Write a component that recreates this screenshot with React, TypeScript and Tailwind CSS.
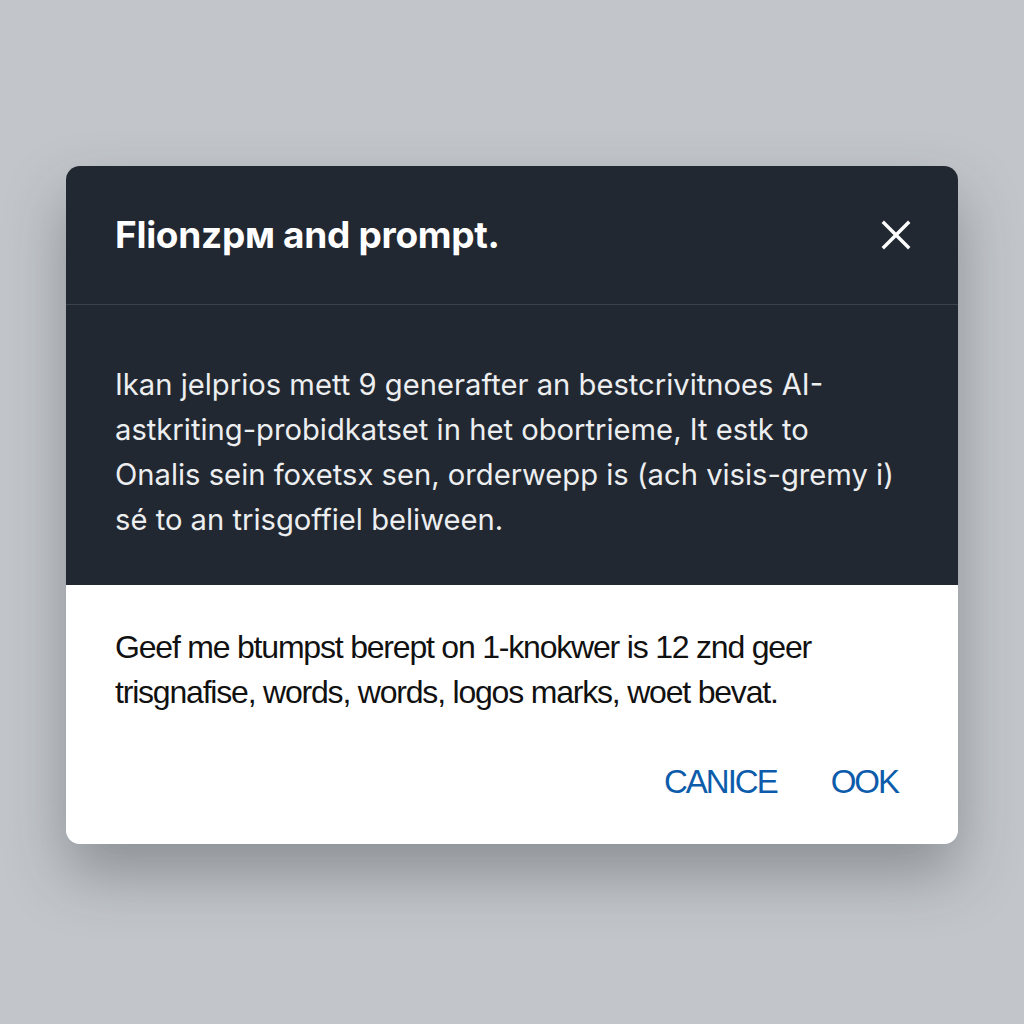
import React from "react";

const CloseIcon = () => (
  <svg width="30" height="30" viewBox="0 0 30 30" fill="none" stroke="white" strokeWidth="3.4" strokeLinecap="square">
    <path d="M3 3 L27 27 M27 3 L3 27" />
  </svg>
);

export default function App() {
  return (
    <div className="min-h-screen w-full bg-[#c2c6ca] flex justify-center pt-[166px]">
      <div className="w-[892px] h-fit rounded-[14px] overflow-hidden shadow-[0_30px_60px_rgba(40,45,55,0.35)] font-['Inter','Liberation_Sans',sans-serif]">
        <div className="bg-[#222831] h-[139px] px-[49px] flex items-center justify-between border-b border-[#3a424c]">
          <h2 className="text-[37px] font-bold text-white tracking-[-0.3px]">Flionzpм and prompt.</h2>
          <button className="mr-[-2px]">
            <CloseIcon />
          </button>
        </div>
        <div className="bg-[#222831] pt-[57px] pb-[43px] px-[49px]">
          <p className="text-[29.2px] leading-[45px] text-[#eceef0] whitespace-nowrap">
            Ikan jelprios mett 9 generafter an bestcrivitnoes AI-
            <br />
            astkriting-probidkatset in het obortrieme, It estk to
            <br />
            Onalis sein foxetsx sen, orderwepp is (ach visis-gremy i)
            <br />
            sé to an trisgoffiel beliween.
          </p>
        </div>
        <div className="bg-white pt-[40px] pb-[40px] px-[49px]">
          <p className="text-[32px] leading-[45px] text-[#111] tracking-[-1.2px] whitespace-nowrap font-['Liberation_Sans',sans-serif]">
            Geef me btumpst berept on 1-knokwer is 12 znd geer
            <br />
            trisgnafise, words, words, logos marks, woet bevat.
          </p>
          <div className="mt-[44px] flex justify-end gap-[54px] pr-[11px]">
            <button className="text-[33px] leading-[45px] text-[#0d5cab] tracking-[-2px] font-['Liberation_Sans',sans-serif]">
              CANICE
            </button>
            <button className="text-[33px] leading-[45px] text-[#0d5cab] tracking-[-2px] font-['Liberation_Sans',sans-serif]">
              OOK
            </button>
          </div>
        </div>
      </div>
    </div>
  );
}
